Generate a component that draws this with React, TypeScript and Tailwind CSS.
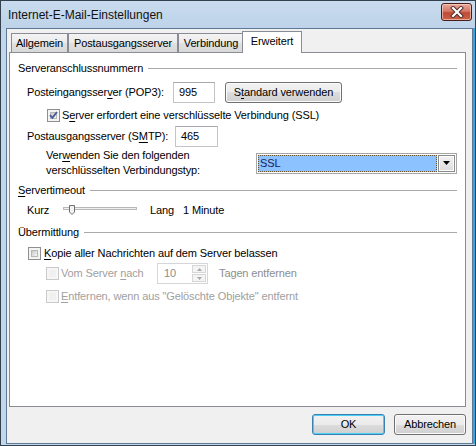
import React from 'react';

const U: React.FC<{ children: React.ReactNode }> = ({ children }) => (
  <span className="underline decoration-1 underline-offset-[2px]">{children}</span>
);

const CheckBox: React.FC<{ checked?: boolean; disabled?: boolean }> = ({ checked, disabled }) => (
  <div
    className={`relative w-[13px] h-[13px] shrink-0 border ${
      disabled ? 'border-[#cacaca] bg-[#f6f6f6]' : 'border-[#8f8f8f] bg-[#f4f4f4]'
    }`}
  >
    <div
      className={`absolute inset-[2px] ${
        disabled
          ? 'bg-[#f0f0f0]'
          : 'border border-[#b8b8b8] bg-[linear-gradient(135deg,#c8c8c8,#f6f6f6)]'
      }`}
    />
    {checked && (
      <svg className="absolute left-0 top-0" width="11" height="11" viewBox="0 0 11 11">
        <path d="M2 5.2 L4.4 7.8 L9 2" fill="none" stroke="#4a5d96" strokeWidth="1.9" />
      </svg>
    )}
  </div>
);

const GroupHeader: React.FC<{ children: React.ReactNode }> = ({ children }) => (
  <div className="flex items-center h-[16px]">
    <span className="whitespace-nowrap">{children}</span>
    <div className="ml-[5px] flex-1 h-px bg-[#a9a9a9]" />
  </div>
);

const TextBox: React.FC<{ value: string; width: string }> = ({ value, width }) => (
  <div
    className={`${width} h-[21px] border border-[#c2c4c8] border-t-[#a6a8ad] bg-white flex items-center pl-[5px]`}
  >
    {value}
  </div>
);

const btn =
  'h-[21px] rounded-[3px] border flex items-center justify-center bg-[linear-gradient(to_bottom,#f2f2f2_0%,#ebebeb_50%,#dddddd_50%,#cfcfcf_100%)]';

const tabs = [
  { label: 'Allgemein', w: 'w-[57px]' },
  { label: 'Postausgangsserver', w: 'w-[110px]' },
  { label: 'Verbindung', w: 'w-[66px]' },
];

const App: React.FC = () => {
  return (
    <div className="w-[476px] h-[446px] border border-[#34414f] bg-[#c3d7eb] flex flex-col font-['Liberation_Sans',Arial,sans-serif] text-[11px] tracking-[-0.12px] leading-[15px] text-black select-none">
      {/* title bar */}
      <div className="h-[27px] flex items-center justify-between pl-[7px] pr-[3px] bg-[linear-gradient(to_bottom,#c9dbee,#bed3e9)]">
        <span className="text-[12px] tracking-normal text-[#111] mt-[1px]">Internet-E-Mail-Einstellungen</span>
        <div className="w-[31px] h-[18px] mt-[-5px] rounded-[3px] border border-[#4a1c18] bg-[linear-gradient(to_bottom,#e9a99b_0%,#d47867_45%,#c04a34_55%,#c9624a_100%)] shadow-[inset_0_0_0_1px_rgba(255,220,210,0.6)] flex items-center justify-center">
          <svg width="14" height="12" viewBox="0 0 14 12">
            <path d="M3 2 L11 10 M11 2 L3 10" stroke="#4a2a26" strokeWidth="4" strokeLinecap="square" />
            <path d="M3 2 L11 10 M11 2 L3 10" stroke="#ffffff" strokeWidth="2.2" strokeLinecap="square" />
          </svg>
        </div>
      </div>

      {/* body */}
      <div className="flex-1 flex ml-[5px] mb-[1px]">
        <div className="flex-1 border border-[#5d7a96] bg-[#f0f0f0] flex flex-col">
          {/* tabs */}
          <div className="flex items-end pt-[2px] pl-[4px] h-[23px]">
            {tabs.map((t) => (
              <div
                key={t.label}
                className={`${t.w} h-[19px] border border-b-0 border-[#898c95] bg-[linear-gradient(to_bottom,#f3f3f3_0%,#ebebeb_50%,#e1e1e1_50%,#d8d8d8_100%)] flex items-center justify-center`}
              >
                {t.label}
              </div>
            ))}
            <div className="relative z-10 w-[60px] h-[22px] ml-[-2px] mb-[-1px] border border-b-0 border-[#898c95] bg-white flex items-start justify-center pt-[2px]">
              Erweitert
            </div>
          </div>

          {/* panel */}
          <div className="ml-[2px] w-[457px] h-[355px] border border-[#898c95] bg-white pl-[8px] pr-[8px] flex flex-col">
            <div className="mt-[7px]">
              <GroupHeader>Serveranschlussnummern</GroupHeader>
            </div>

            <div className="mt-[6px] h-[21px] flex items-center pl-[9px]">
              <span className="w-[146px]">
                Posteingangsser<U>v</U>er (POP3):
              </span>
              <TextBox value="995" width="w-[42px]" />
              <div className={`${btn} ml-[10px] w-[117px] border-[#707070] shadow-[inset_0_0_0_1px_#fbfbfb]`}>
                S<U>t</U>andard verwenden
              </div>
            </div>

            <div className="mt-[4px] h-[16px] flex items-center pl-[29px]">
              <CheckBox checked />
              <span className="ml-[2px]">
                S<U>e</U>rver erfordert eine verschlüsselte Verbindung (SSL)
              </span>
            </div>

            <div className="mt-[3px] h-[21px] flex items-center pl-[9px]">
              <span className="w-[148px]">
                Postausgangsserver (S<U>M</U>TP):
              </span>
              <TextBox value="465" width="w-[43px]" />
            </div>

            <div className="mt-[1px] h-[30px] flex items-center pl-[28px]">
              <div className="w-[210px] flex flex-col">
                <span>
                  Ver<U>w</U>enden Sie den folgenden
                </span>
                <span>verschlüsselten Verbindungstyp:</span>
              </div>
              <div className="w-[201px] h-[21px] border border-[#a5a5a5] bg-white flex p-[1px]">
                <div className="flex-1 bg-[#8cc2ff] border border-dotted border-[#6a5230] flex items-center pl-[1px] text-[#1a1a5a]">
                  SSL
                </div>
                <div className="w-[17px] ml-[1px] border border-[#8a8a8a] shadow-[inset_0_0_0_1px_#ffffff] bg-[linear-gradient(to_bottom,#f2f2f2,#dcdcdc)] flex items-center justify-center">
                  <svg width="7" height="4" viewBox="0 0 7 4">
                    <path d="M0 0 H7 L3.5 4 Z" fill="#000" />
                  </svg>
                </div>
              </div>
            </div>

            <div className="mt-[4px]">
              <GroupHeader>
                <U>S</U>ervertimeout
              </GroupHeader>
            </div>

            <div className="mt-[4px] h-[16px] flex items-center pl-[9px]">
              <span className="w-[36px]">Kurz</span>
              <svg width="74" height="16" viewBox="0 0 74 16">
                <rect x="0.5" y="5.5" width="73" height="2" fill="#f0f0f0" stroke="#b8b8b8" />
                <path d="M6.5 3.5 H11.5 V10 L9 12.5 L6.5 10 Z" fill="#f2f2f2" stroke="#6f6f6f" />
              </svg>
              <span className="ml-[13px] w-[33px]">Lang</span>
              <span>1 Minute</span>
            </div>

            <div className="mt-[6px]">
              <GroupHeader>Übermittlung</GroupHeader>
            </div>

            <div className="mt-[5px] h-[16px] flex items-center pl-[10px]">
              <CheckBox />
              <span className="ml-[3px]">
                <U>K</U>opie aller Nachrichten auf dem Server belassen
              </span>
            </div>

            <div className="mt-[2px] h-[21px] flex items-center pl-[28px] text-[#a0a0a0]">
              <CheckBox disabled />
              <span className="ml-[2px] w-[96px]">
                Vom Server <U>n</U>ach
              </span>
              <div className="w-[51px] h-[21px] border border-[#d6d6d6] bg-white flex">
                <span className="flex-1 flex items-center pl-[6px] text-[#8c8c8c]">10</span>
                <div className="w-[16px] flex flex-col p-[1px] gap-[1px]">
                  <div className="flex-1 border border-[#d6d6d6] bg-[#f4f4f4] flex items-center justify-center">
                    <svg width="5" height="3" viewBox="0 0 5 3">
                      <path d="M0 3 H5 L2.5 0 Z" fill="#a8a8a8" />
                    </svg>
                  </div>
                  <div className="flex-1 border border-[#d6d6d6] bg-[#f4f4f4] flex items-center justify-center">
                    <svg width="5" height="3" viewBox="0 0 5 3">
                      <path d="M0 0 H5 L2.5 3 Z" fill="#a8a8a8" />
                    </svg>
                  </div>
                </div>
              </div>
              <span className="ml-[11px] text-[#8d8d8d]">Tagen entfernen</span>
            </div>

            <div className="mt-[4px] h-[16px] flex items-center pl-[28px] text-[#a0a0a0]">
              <CheckBox disabled />
              <span className="ml-[2px]">
                <U>E</U>ntfernen, wenn aus "Gelöschte Objekte" entfernt
              </span>
            </div>
          </div>

          {/* dialog buttons */}
          <div className="mt-[7px] flex justify-end pr-[6px] gap-[9px]">
            <div className={`${btn} w-[73px] border-[#3c7fb1] shadow-[inset_0_0_0_1px_#48d0f8]`}>OK</div>
            <div className={`${btn} w-[72px] border-[#707070] shadow-[inset_0_0_0_1px_#fbfbfb]`}>Abbrechen</div>
          </div>
        </div>
        <div className="w-[2px] bg-[#39a4e1]" />
      </div>
    </div>
  );
};

export default App;
